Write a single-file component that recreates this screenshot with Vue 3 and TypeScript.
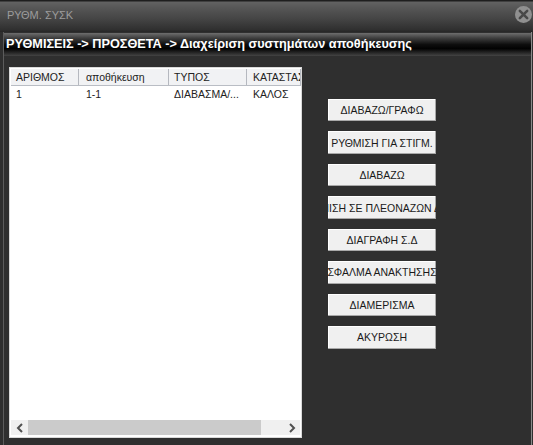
<script setup lang="ts">
const columns = [
  { label: 'ΑΡΙΘΜΟΣ', width: 68, inset: 5 },
  { label: 'αποθήκευση', width: 90, inset: 7 },
  { label: 'ΤΥΠΟΣ', width: 78, inset: 5 },
  { label: 'ΚΑΤΑΣΤΑΣΗ', width: 54, inset: 6 },
]
const cells = ['1', '1-1', 'ΔΙΑΒΑΣΜΑ/...', 'ΚΑΛΟΣ']
const actions = [
  'ΔΙΑΒΑΖΩ/ΓΡΑΦΩ',
  'ΡΥΘΜΙΣΗ ΓΙΑ ΣΤΙΓΜ.',
  'ΔΙΑΒΑΖΩ',
  'ΡΥΘΜΙΣΗ ΣΕ ΠΛΕΟΝΑΖΩΝ ΔΙΣΚΟ',
  'ΔΙΑΓΡΑΦΗ Σ.Δ',
  'ΣΦΑΛΜΑ ΑΝΑΚΤΗΣΗΣ',
  'ΔΙΑΜΕΡΙΣΜΑ',
  'ΑΚΥΡΩΣΗ',
]
</script>

<template>
  <div class="window">
    <header class="titlebar">
      <span class="title">ΡΥΘΜ. ΣΥΣΚ</span>
      <span class="close" aria-label="close">
        <svg width="11" height="11" viewBox="0 0 12 12">
          <path d="M2 2 L10 10 M10 2 L2 10" stroke="#484848" stroke-width="2.8" stroke-linecap="round" />
        </svg>
      </span>
    </header>
    <div class="panel">
      <div class="crumb">ΡΥΘΜΙΣΕΙΣ -&gt; ΠΡΟΣΘΕΤΑ -&gt; Διαχείριση συστημάτων αποθήκευσης</div>
      <main class="body">
        <section class="table">
          <div class="head">
            <div
              v-for="c in columns"
              :key="c.label"
              class="hcell"
              :style="{ width: c.width + 'px', paddingLeft: c.inset + 'px' }"
            >{{ c.label }}</div>
          </div>
          <div class="row">
            <div
              v-for="(v, i) in cells"
              :key="v"
              class="cell"
              :style="{ width: columns[i].width + 'px', paddingLeft: columns[i].inset + 'px' }"
            >{{ v }}</div>
          </div>
          <div class="scrollbar">
            <span class="arrow">
              <svg width="8" height="10" viewBox="0 0 8 10"><path d="M6 1 L2 5 L6 9" fill="none" stroke="#505050" stroke-width="2" /></svg>
            </span>
            <span class="track"><span class="thumb"></span></span>
            <span class="arrow">
              <svg width="8" height="10" viewBox="0 0 8 10"><path d="M2 1 L6 5 L2 9" fill="none" stroke="#505050" stroke-width="2" /></svg>
            </span>
          </div>
        </section>
        <nav class="actions">
          <button v-for="a in actions" :key="a" class="btn"><span class="label">{{ a }}</span></button>
        </nav>
      </main>
    </div>
  </div>
</template>

<style>
html, body { margin: 0; background: #2e2e2e; }
</style>

<style scoped>
.window {
  width: 533px;
  height: 445px;
  overflow: hidden;
  display: flex;
  flex-direction: column;
  background: #2f2f2f;
  font-family: "Liberation Sans", Arial, sans-serif;
}
.titlebar {
  height: 32px;
  flex: none;
  display: flex;
  align-items: center;
  justify-content: space-between;
  padding: 0 1px 3px 7px;
  background: linear-gradient(#1e1e1e 0, #1e1e1e 1px, #626262 2px, #565656 25%, #444 60%, #303030 92%, #262626 100%);
  box-sizing: border-box;
}
.title {
  color: #9c9c9c;
  font-size: 11px;
}
.close {
  width: 17px;
  height: 17px;
  border-radius: 50%;
  background: #909090;
  display: flex;
  align-items: center;
  justify-content: center;
}
.panel {
  flex: 1;
  min-height: 0;
  display: flex;
  flex-direction: column;
  margin: 0 1px 0 3px;
  border-left: 1px solid #5c5c5c;
  border-right: 1px solid #8a8a8a;
}
.crumb {
  height: 23px;
  flex: none;
  margin: 1px 0 0;
  padding: 0 0 0 2px;
  box-sizing: border-box;
  line-height: 22px;
  color: #fff;
  font-size: 12.7px;
  font-weight: 700;
  white-space: nowrap;
  background: linear-gradient(#6e6e6e 0, #3e3e3e 22%, #0e0e0e 50%, #020202 68%, #444 100%);
}
.body {
  flex: 1;
  display: flex;
  align-items: flex-start;
  padding: 11px 0 0 5px;
  min-height: 0;
}
.table {
  width: 293px;
  height: 371px;
  flex: none;
  background: #fff;
  border: 1px solid #d9d9d9;
  box-sizing: border-box;
  display: flex;
  flex-direction: column;
  padding: 1px 0 2px 1px;
  overflow: hidden;
}
.head {
  display: flex;
  height: 16px;
  flex: none;
  background: #f1f2f4;
  border-bottom: 1px solid #b9bdc4;
}
.hcell {
  flex: none;
  box-sizing: border-box;
  font-size: 10.5px;
  line-height: 16px;
  color: #222;
  white-space: nowrap;
  overflow: hidden;
  border-right: 1px solid #b5b8bf;
}
.row {
  display: flex;
  flex: 1;
  min-height: 0;
}
.cell {
  flex: none;
  box-sizing: border-box;
  font-size: 10.5px;
  line-height: 17px;
  color: #222;
  white-space: nowrap;
}
.scrollbar {
  flex: none;
  height: 15px;
  display: flex;
  align-items: stretch;
  background: #f0f0f0;
  margin-right: 1px;
}
.arrow {
  width: 17px;
  flex: none;
  display: flex;
  align-items: center;
  justify-content: center;
}
.track {
  flex: 1;
  display: flex;
  padding-right: 22px;
}
.thumb {
  flex: 1;
  background: #cbcbcb;
}
.actions {
  margin: 32px 0 0 26px;
  width: 108px;
  display: flex;
  flex-direction: column;
  gap: 10px;
}
.btn {
  height: 22.45px;
  width: 108px;
  padding: 0;
  margin: 0;
  border: none;
  flex: none;
  background: #f0f0f0;
  box-shadow: inset -1px -1px 0 #a8a8a8, inset 1px 1px 0 #fff;
  color: #1a1a1a;
  font-family: inherit;
  font-size: 10.5px;
  display: flex;
  justify-content: center;
  align-items: center;
  overflow: hidden;
  white-space: nowrap;
}
.label {
  flex: none;
}
</style>
